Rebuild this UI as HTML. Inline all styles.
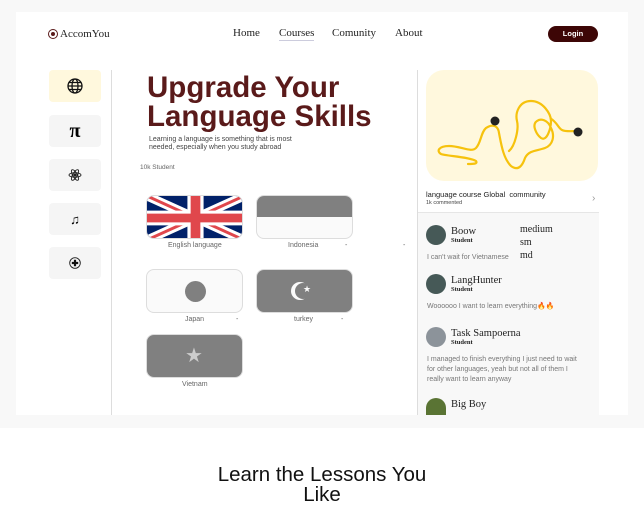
<!DOCTYPE html>
<html><head><style>
*{margin:0;padding:0;box-sizing:border-box}
body{width:644px;height:506px;background:#fff;font-family:"Liberation Sans",sans-serif;position:relative;overflow:hidden}
.abs{position:absolute}
.serif{font-family:"Liberation Serif",serif}
.side{position:absolute;left:49px;width:52px;height:32px;background:#f5f5f5;border-radius:4px;display:flex;align-items:center;justify-content:center}
.flag{position:absolute;width:97px;height:44px;border-radius:8px;border:1.5px solid #ddd;overflow:hidden;background:#fafafa}
.lbl{position:absolute;font-size:7px;color:#666}
.av{position:absolute;left:426px;width:20px;height:20px;border-radius:50%}
.nm{position:absolute;left:451px;font-size:10.5px;color:#222;font-family:"Liberation Serif",serif}
.st{position:absolute;left:451px;font-size:6.5px;color:#222;font-family:"Liberation Serif",serif;font-weight:bold}
.cm{position:absolute;left:427px;font-size:7px;color:#777;line-height:10px}
</style></head><body>
<div class="abs" style="left:0;top:0;width:644px;height:428px;background:#f8f8f8"></div>
<div class="abs" style="left:16px;top:12px;width:612px;height:403px;background:#fff"></div>
<!-- nav -->
<div class="abs" style="left:48px;top:29px;width:10px;height:10px;border-radius:50%;border:1.5px solid #5a1a1a"><div style="margin:1.5px;width:4px;height:4px;border-radius:50%;background:#5a1a1a"></div></div>
<div class="abs serif" style="left:60px;top:28px;font-size:11px;color:#222">AccomYou</div>
<div class="abs serif" style="left:233px;top:27px;font-size:11px;color:#222">Home</div>
<div class="abs serif" style="left:279px;top:27px;font-size:11px;color:#222">Courses</div>
<div class="abs" style="left:279px;top:40px;width:35px;height:1px;background:#ccd"></div>
<div class="abs serif" style="left:332px;top:27px;font-size:11px;color:#222">Comunity</div>
<div class="abs serif" style="left:395px;top:27px;font-size:11px;color:#222">About</div>
<div class="abs" style="left:548px;top:26px;width:50px;height:16px;border-radius:8px;background:#3d0606;color:#fff;font-size:7.5px;font-weight:bold;text-align:center;line-height:16px">Login</div>
<!-- sidebar -->
<div class="side" style="top:70px;background:#fff8dd"><svg width="16" height="16" viewBox="0 0 16 16" fill="none" stroke="#111" stroke-width="1.3"><circle cx="8" cy="8" r="7"/><ellipse cx="8" cy="8" rx="3" ry="7"/><path d="M1 8h14M2 4.5h12M2 11.5h12"/></svg></div>
<div class="side" style="top:115px"><span style="font-size:20px;font-weight:bold;font-family:'Liberation Serif',serif">π</span></div>
<div class="side" style="top:159px"><svg width="14" height="14" viewBox="0 0 14 14" fill="none" stroke="#222" stroke-width="0.9"><ellipse cx="7" cy="7" rx="6" ry="2.3"/><ellipse cx="7" cy="7" rx="6" ry="2.3" transform="rotate(60 7 7)"/><ellipse cx="7" cy="7" rx="6" ry="2.3" transform="rotate(-60 7 7)"/><circle cx="7" cy="7" r="1.2" fill="#222"/></svg></div>
<div class="side" style="top:203px"><span style="font-size:13px;font-weight:bold">♫</span></div>
<div class="side" style="top:247px"><svg width="12" height="12" viewBox="0 0 12 12"><circle cx="6" cy="6" r="5.3" fill="none" stroke="#222" stroke-width="0.9"/><path d="M6 2.8v6.4M2.8 6h6.4" stroke="#111" stroke-width="2.2"/></svg></div>
<div class="abs" style="left:111px;top:70px;width:1px;height:345px;background:#ddd"></div>
<div class="abs" style="left:417px;top:70px;width:1px;height:345px;background:#ddd"></div>
<!-- hero -->
<div class="abs" style="left:147px;top:73px;font-size:29.5px;line-height:29px;font-weight:bold;color:#5a1a1a;letter-spacing:0">Upgrade Your<br>Language Skills</div>
<div class="abs" style="left:149px;top:136px;font-size:7px;line-height:8px;color:#444">Learning a language is something that is most<br>needed, especially when you study abroad</div>
<div class="abs" style="left:140px;top:164px;font-size:6.5px;color:#666">10k Student</div>
<!-- flags -->
<div class="flag" style="left:146px;top:195px;background:#012169"><svg width="97" height="44" viewBox="0 0 60 30" preserveAspectRatio="none"><path d="M0 0L60 30M60 0L0 30" stroke="#fff" stroke-width="6"/><path d="M0 0L60 30M60 0L0 30" stroke="#e0474c" stroke-width="2"/><path d="M30 0v30M0 15h60" stroke="#fff" stroke-width="10"/><path d="M30 0v30M0 15h60" stroke="#e0474c" stroke-width="6"/></svg></div>
<div class="flag" style="left:256px;top:195px"><div style="height:21px;background:#808080"></div></div>
<div class="lbl" style="left:168px;top:242px">English language</div>
<div class="lbl" style="left:288px;top:242px">Indonesia</div>
<div class="lbl" style="left:345px;top:242px">-</div>
<div class="lbl" style="left:403px;top:242px">-</div>
<div class="flag" style="left:146px;top:269px"><div style="position:absolute;left:38px;top:11px;width:21px;height:21px;border-radius:50%;background:#808080"></div></div>
<div class="flag" style="left:256px;top:269px;background:#808080"><div style="position:absolute;left:34px;top:12px;width:18px;height:18px;border-radius:50%;background:#fafafa"></div><div style="position:absolute;left:38px;top:13px;width:16px;height:16px;border-radius:50%;background:#808080"></div><span style="position:absolute;left:46px;top:14px;color:#fafafa;font-size:9px">★</span></div>
<div class="lbl" style="left:185px;top:316px">Japan</div>
<div class="lbl" style="left:236px;top:316px">-</div>
<div class="lbl" style="left:294px;top:316px">turkey</div>
<div class="lbl" style="left:341px;top:316px">-</div>
<div class="flag" style="left:146px;top:334px;background:#808080"><span style="position:absolute;left:38px;top:8px;color:#ccc;font-size:20px">★</span></div>
<div class="lbl" style="left:182px;top:381px">Vietnam</div>
<!-- right card -->
<div class="abs" style="left:426px;top:70px;width:172px;height:111px;border-radius:18px;background:#fff8dd;overflow:hidden">
<svg width="172" height="111" viewBox="426 70 172 111" fill="none"><path d="M468 164c5 0 10 0 8-3-6-4-30-5-35-7-5-3-2-8 8-8 12 0 22 7 27 2 5-5 5-16 10-20 6-4 12-3 13 5 2 10 4 25 12 33 8 6 12-2 14-8 4-8 12-7 20-10 8-3 10-12 6-20-3-8-10-10-14-7-6 4 0 14 4 17 6 4 10-10 10-17 0-7-8-20-20-20-12 0-16 12-14 20 2 8-2 25-8 30" stroke="#f6c20d" stroke-width="2.2" stroke-linecap="round"/><path d="M550 118c8 5 8 10 12 12 4 2 10 1 16 1" stroke="#f6c20d" stroke-width="2.2"/><circle cx="495" cy="121" r="4.5" fill="#222"/><circle cx="578" cy="132" r="4.5" fill="#222"/></svg></div>
<div class="abs" style="left:426px;top:190px;font-size:7.5px;color:#222">language course Global&nbsp; community</div>
<div class="abs" style="left:426px;top:200px;font-size:5.5px;color:#444">1k commented</div>
<div class="abs" style="left:592px;top:193px;font-size:10px;color:#999">›</div>
<div class="abs" style="left:418px;top:212px;width:181px;height:203px;background:#f8f8f8;border-top:1px solid #e6e6e6"></div>
<div class="av" style="top:225px;background:#465957"></div>
<div class="nm" style="top:226px">Boow</div><div class="st" style="top:237px">Student</div>
<div class="abs serif" style="left:520px;top:223px;font-size:10px;line-height:13px;color:#222">medium<br>sm<br>md</div>
<div class="cm" style="top:253px">I can't wait for Vietnamese</div>
<div class="av" style="top:274px;background:#465957"></div>
<div class="nm" style="top:275px">LangHunter</div><div class="st" style="top:286px">Student</div>
<div class="cm" style="top:302px">Woooooo I want to learn everything🔥🔥</div>
<div class="av" style="top:327px;background:#8c939a"></div>
<div class="nm" style="top:328px">Task Sampoerna</div><div class="st" style="top:339px">Student</div>
<div class="cm" style="top:355px">I managed to finish everything I just need to wait<br>for other languages, yeah but not all of them I<br>really want to learn anyway</div>
<div class="av" style="top:398px;height:17px;border-radius:10px 10px 0 0;background:#5a7434"></div>
<div class="nm" style="top:399px">Big Boy</div>
<!-- bottom -->
<div class="abs" style="left:0;width:644px;top:465px;text-align:center;font-size:20.5px;line-height:20px;color:#111">Learn the Lessons You<br>Like</div>
</body></html>
